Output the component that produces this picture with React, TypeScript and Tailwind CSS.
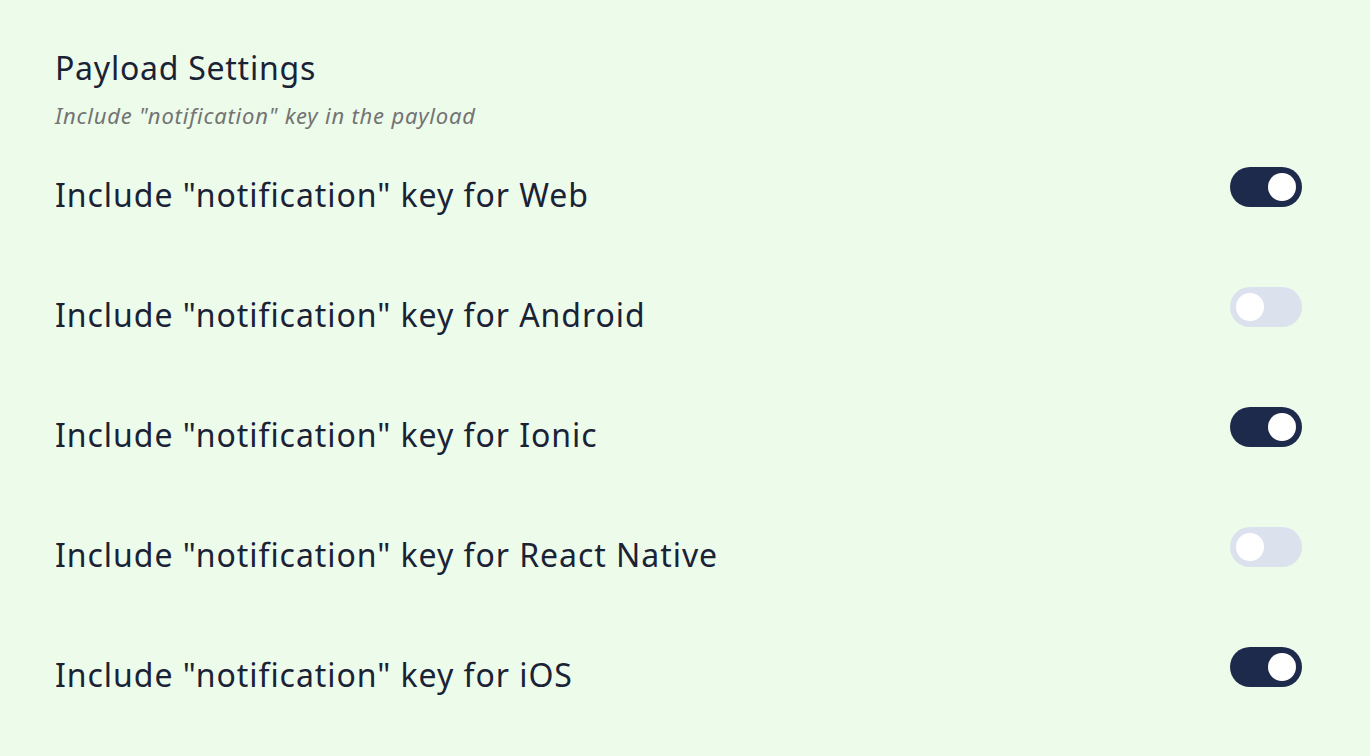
import React from "react";

const rows: { label: string; on: boolean }[] = [
  { label: 'Include "notification" key for Web', on: true },
  { label: 'Include "notification" key for Android', on: false },
  { label: 'Include "notification" key for Ionic', on: true },
  { label: 'Include "notification" key for React Native', on: false },
  { label: 'Include "notification" key for iOS', on: true },
];

function Toggle({ on }: { on: boolean }) {
  return on ? (
    <div className="w-[72px] h-[40px] rounded-full bg-[#1d2a4b] flex items-center justify-end px-[6px] shrink-0">
      <div className="w-[28px] h-[28px] rounded-full bg-white" />
    </div>
  ) : (
    <div className="w-[72px] h-[40px] rounded-full bg-[#dce1ee] flex items-center justify-start px-[6px] shrink-0">
      <div className="w-[28px] h-[28px] rounded-full bg-white" />
    </div>
  );
}

export default function App() {
  return (
    <div
      className="w-[1370px] h-[756px] bg-[#edfbea] text-[#1a2236] pl-[55px] pr-[68px] pt-[48px] overflow-hidden"
      style={{ fontFamily: "'Noto Sans', sans-serif" }}
    >
      <h1 className="text-[32px] leading-[40px] font-normal tracking-[0.75px]">Payload Settings</h1>
      <p className="text-[22px] leading-[30px] italic text-[#737373] mt-[12px] tracking-[0.8px]">
        Include "notification" key in the payload
      </p>
      <div className="mt-[37px] flex flex-col">
        {rows.map((r) => (
          <div key={r.label} className="h-[120px] flex items-start justify-between">
            <span className="text-[32px] leading-[40px] mt-[8px] tracking-[0.95px]">{r.label}</span>
            <Toggle on={r.on} />
          </div>
        ))}
      </div>
    </div>
  );
}
